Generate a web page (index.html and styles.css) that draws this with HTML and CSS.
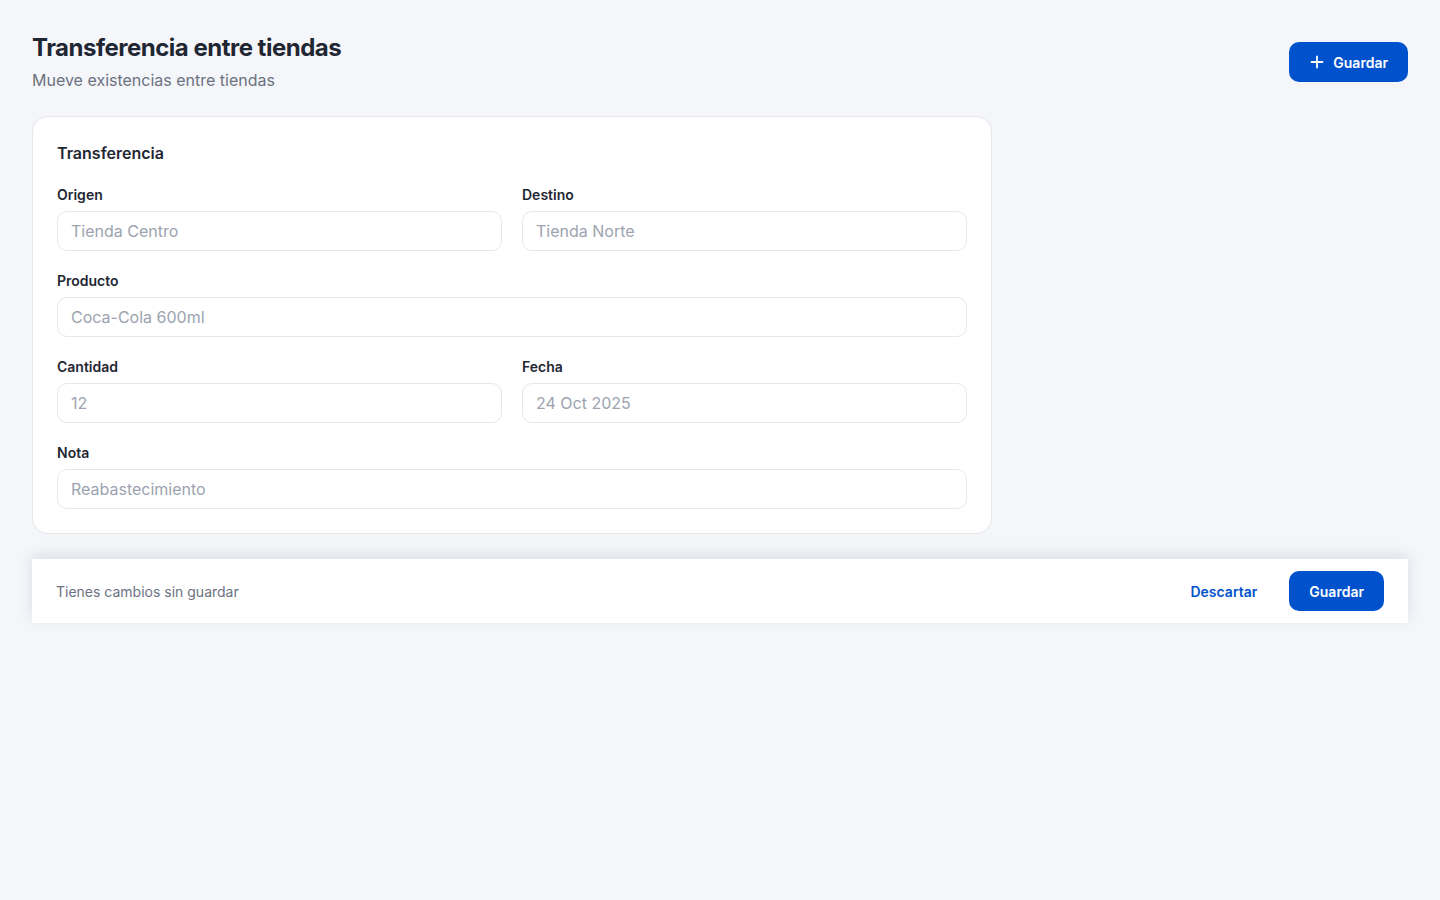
FILE: index.html
```html
<!DOCTYPE html>
<html lang="es">
<head>
<meta charset="utf-8">
<title>Transferencia entre tiendas</title>
<link rel="stylesheet" href="styles.css">
</head>
<body>
<div class="page">
  <header class="page-header">
    <div class="heading">
      <h1 class="title">Transferencia entre tiendas</h1>
      <p class="subtitle">Mueve existencias entre tiendas</p>
    </div>
    <button class="btn btn-primary btn-icon" type="button">
      <svg width="16" height="16" viewBox="0 0 16 16" fill="none" aria-hidden="true">
        <path d="M8 2.5v11M2.5 8h11" stroke="currentColor" stroke-width="1.8" stroke-linecap="round"/>
      </svg>
      Guardar
    </button>
  </header>

  <section class="card">
    <h2 class="card-title">Transferencia</h2>
    <div class="form-grid">
      <label class="field">
        <span class="label">Origen</span>
        <input class="input" type="text" placeholder="Tienda Centro">
      </label>
      <label class="field">
        <span class="label">Destino</span>
        <input class="input" type="text" placeholder="Tienda Norte">
      </label>
      <label class="field field-wide">
        <span class="label">Producto</span>
        <input class="input" type="text" placeholder="Coca-Cola 600ml">
      </label>
      <label class="field">
        <span class="label">Cantidad</span>
        <input class="input" type="text" placeholder="12">
      </label>
      <label class="field">
        <span class="label">Fecha</span>
        <input class="input" type="text" placeholder="24 Oct 2025">
      </label>
      <label class="field field-wide">
        <span class="label">Nota</span>
        <input class="input" type="text" placeholder="Reabastecimiento">
      </label>
    </div>
  </section>

  <div class="save-bar">
    <span class="save-text">Tienes cambios sin guardar</span>
    <div class="save-actions">
      <button class="btn btn-link" type="button">Descartar</button>
      <button class="btn btn-primary" type="button">Guardar</button>
    </div>
  </div>
</div>
</body>
</html>
```

FILE: styles.css
```css
* {
  box-sizing: border-box;
}

html, body {
  margin: 0;
  padding: 0;
  background: #f5f6fa;
}

body {
  font-family: Inter, "Noto Sans", "Liberation Sans", sans-serif;
  color: #1f2937;
}

.page {
  padding: 32px;
  display: flex;
  flex-direction: column;
  gap: 24px;
}

.page-header {
  display: flex;
  align-items: center;
  justify-content: space-between;
}

.heading {
  display: flex;
  flex-direction: column;
  gap: 4px;
}

.title {
  margin: 0;
  font-size: 24px;
  line-height: 32px;
  font-weight: 700;
  color: #1f2733;
  letter-spacing: -0.5px;
}

.subtitle {
  margin: 0;
  font-size: 16px;
  line-height: 24px;
  color: #6b7280;
}

.btn {
  font-family: inherit;
  font-size: 14px;
  font-weight: 600;
  height: 40px;
  border-radius: 10px;
  border: none;
  cursor: pointer;
  display: inline-flex;
  align-items: center;
  justify-content: center;
  gap: 8px;
}

.btn-primary {
  background: #0052cc;
  color: #ffffff;
  padding: 0 20px;
}

.btn-link {
  background: transparent;
  color: #0052cc;
  padding: 0 16px;
}

.card {
  width: 960px;
  background: #ffffff;
  border: 1px solid #e5e7eb;
  border-radius: 16px;
  padding: 24px;
}

.card-title {
  margin: 0 0 20px;
  font-size: 16px;
  line-height: 24px;
  font-weight: 600;
  color: #1f2733;
}

.form-grid {
  display: grid;
  grid-template-columns: 1fr 1fr;
  column-gap: 20px;
  row-gap: 20px;
}

.field {
  display: flex;
  flex-direction: column;
  gap: 6px;
}

.field-wide {
  grid-column: 1 / -1;
}

.label {
  font-size: 14px;
  line-height: 20px;
  font-weight: 600;
  color: #1f2733;
}

.input {
  height: 40px;
  border: 1px solid #e5e7eb;
  border-radius: 10px;
  padding: 0 13px;
  font-family: inherit;
  font-size: 16px;
  color: #1f2733;
  background: #ffffff;
  outline: none;
}

.input::placeholder {
  color: #9ca3af;
}

.save-bar {
  height: 64px;
  margin-top: 1px;
  background: #ffffff;
  display: flex;
  align-items: center;
  justify-content: space-between;
  padding: 0 24px;
  box-shadow: 0 -4px 14px rgba(15, 23, 42, 0.10);
}

.save-text {
  font-size: 14px;
  color: #6b7280;
}

.save-actions {
  display: flex;
  align-items: center;
  gap: 16px;
}
```
